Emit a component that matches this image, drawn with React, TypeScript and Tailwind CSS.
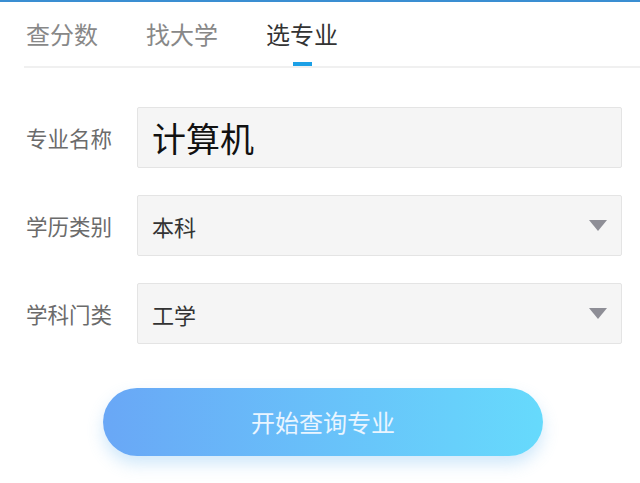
import React from 'react';

const FONT = "font-['Noto_Sans_CJK_SC','Noto_Sans',sans-serif]";

const tabs = ['查分数', '找大学', '选专业'];

const Caret = () => (
  <svg width="18" height="11" viewBox="0 0 18 11" className="shrink-0">
    <polygon points="0,0 18,0 9,11" fill="#8e8e96" />
  </svg>
);

const Field = ({ label, value, big, select }: { label: string; value: string; big?: boolean; select?: boolean }) => (
  <div className="flex items-center">
    <div className="w-[137px] shrink-0 pl-[26px] text-[21.5px] leading-none text-[#6b6b6b]">{label}</div>
    <div className="flex h-[61px] w-[485px] items-center justify-between rounded-[2px] border border-[#e4e4e4] bg-[#f5f5f5] pl-[14px] pr-[14px]">
      <span className={big ? 'text-[34px] leading-none text-[#111]' : 'text-[22px] leading-none text-[#333]'}>{value}</span>
      {select && <Caret />}
    </div>
  </div>
);

export default function App() {
  return (
    <div className={`${FONT} h-[483px] w-[640px] overflow-hidden border-t-2 border-[#3a8ed2] bg-white`}>
      {/* Tabs */}
      <div className="flex gap-[48px] pl-[26px] pt-[16px]">
        {tabs.map((t, i) => (
          <div key={t} className="flex flex-col items-center">
            <span className={`text-[24px] leading-[32px] ${i === 2 ? 'text-[#333]' : 'text-[#888]'}`}>{t}</span>
            <div className={`mt-[12px] h-[4px] w-[19px] ${i === 2 ? 'bg-[#1ca0e6]' : 'bg-transparent'}`}></div>
          </div>
        ))}
      </div>
      <div className="ml-[24px] h-[2px] bg-[#f0f0f0]"></div>

      {/* Form */}
      <div className="mt-[39px] flex flex-col gap-[27px]">
        <Field label="专业名称" value="计算机" big />
        <Field label="学历类别" value="本科" select />
        <Field label="学科门类" value="工学" select />
      </div>

      <div className="mt-[44px] pl-[103px]">
        <button className="flex h-[68px] w-[440px] items-center justify-center rounded-full bg-gradient-to-r from-[#69a7f6] to-[#66dafc] text-[24px] text-[#eaf5ff] shadow-[0_8px_16px_rgba(100,180,240,0.3)]">
          开始查询专业
        </button>
      </div>
    </div>
  );
}
